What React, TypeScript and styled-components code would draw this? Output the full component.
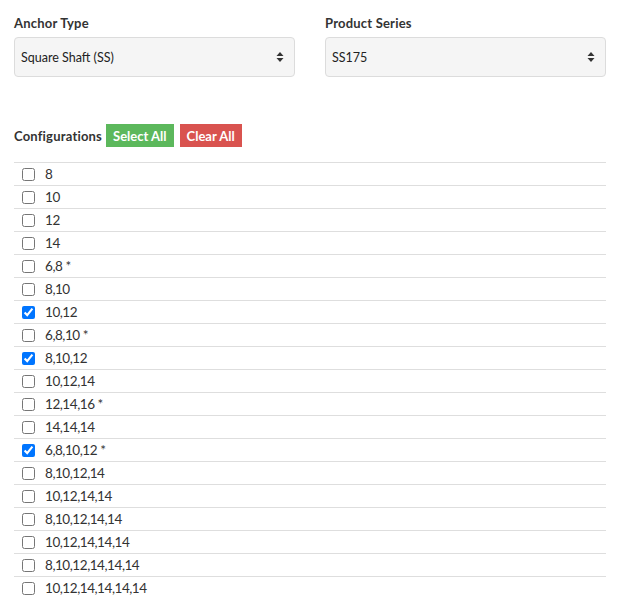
import React from 'react';
import styled, { createGlobalStyle } from 'styled-components';

const GlobalStyle = createGlobalStyle`
  body {
    margin: 0;
    background: #fff;
    font-family: Lato, "Open Sans", sans-serif;
    color: #333;
  }
`;

const Page = styled.div`
  padding: 14px 13px 0 14px;
`;

const Fields = styled.div`
  display: grid;
  grid-template-columns: 1fr 1fr;
  gap: 30px;
`;

const Field = styled.div`
  display: flex;
  flex-direction: column;
`;

const Label = styled.label`
  font-size: 13px;
  font-weight: 700;
  color: #333;
  line-height: 18px;
  margin-bottom: 5px;
  letter-spacing: 0.2px;
`;

const SelectBox = styled.div`
  height: 40px;
  box-sizing: border-box;
  display: flex;
  align-items: center;
  justify-content: space-between;
  padding: 0 10px 0 6px;
  background: #f5f5f5;
  border: 1px solid #dcdcdc;
  border-radius: 4px;
  font-size: 12.5px;
  color: #222;
`;

const ConfigHeader = styled.div`
  display: flex;
  align-items: center;
  gap: 6px;
  margin-top: 47px;
  margin-bottom: 15px;
`;

const ConfigTitle = styled.span`
  font-size: 13px;
  font-weight: 700;
  color: #333;
  letter-spacing: 0.2px;
  margin-right: -2px;
`;

const ActionButton = styled.button<{ $tone: 'green' | 'red' }>`
  height: 23px;
  padding: 0 7px;
  border: none;
  border-radius: 0;
  font-family: inherit;
  font-size: 13px;
  font-weight: 700;
  color: #fff;
  background: ${p => (p.$tone === 'green' ? '#5cb85c' : '#d9534f')};
  cursor: pointer;
`;

const List = styled.ul`
  list-style: none;
  margin: 0;
  padding: 0;
`;

const Row = styled.li`
  height: 23px;
  box-sizing: border-box;
  border-top: 1px solid #dedede;
  display: flex;
  align-items: center;
  padding-left: 8px;
`;

const Check = styled.input`
  width: 13px;
  height: 13px;
  margin: 0 10px 0 0;
`;

const RowLabel = styled.span`
  font-size: 13.5px;
  letter-spacing: -0.45px;
  color: #333;
  margin-top: -1px;
`;

const Arrows = () => (
  <svg width="8" height="12" viewBox="0 0 8 12">
    <path d="M4 1 L7.5 5 H0.5 Z" fill="#333" />
    <path d="M4 11 L7.5 7 H0.5 Z" fill="#333" />
  </svg>
);

const configs: [string, boolean][] = [
  ['8', false],
  ['10', false],
  ['12', false],
  ['14', false],
  ['6,8 *', false],
  ['8,10', false],
  ['10,12', true],
  ['6,8,10 *', false],
  ['8,10,12', true],
  ['10,12,14', false],
  ['12,14,16 *', false],
  ['14,14,14', false],
  ['6,8,10,12 *', true],
  ['8,10,12,14', false],
  ['10,12,14,14', false],
  ['8,10,12,14,14', false],
  ['10,12,14,14,14', false],
  ['8,10,12,14,14,14', false],
  ['10,12,14,14,14,14', false],
];

export default function App() {
  return (
    <Page>
      <GlobalStyle />
      <Fields>
        <Field>
          <Label>Anchor Type</Label>
          <SelectBox>
            <span>Square Shaft (SS)</span>
            <Arrows />
          </SelectBox>
        </Field>
        <Field>
          <Label>Product Series</Label>
          <SelectBox>
            <span>SS175</span>
            <Arrows />
          </SelectBox>
        </Field>
      </Fields>
      <ConfigHeader>
        <ConfigTitle>Configurations</ConfigTitle>
        <ActionButton $tone="green">Select All</ActionButton>
        <ActionButton $tone="red">Clear All</ActionButton>
      </ConfigHeader>
      <List>
        {configs.map(([name, checked]) => (
          <Row key={name}>
            <Check type="checkbox" defaultChecked={checked} />
            <RowLabel>{name}</RowLabel>
          </Row>
        ))}
      </List>
    </Page>
  );
}
